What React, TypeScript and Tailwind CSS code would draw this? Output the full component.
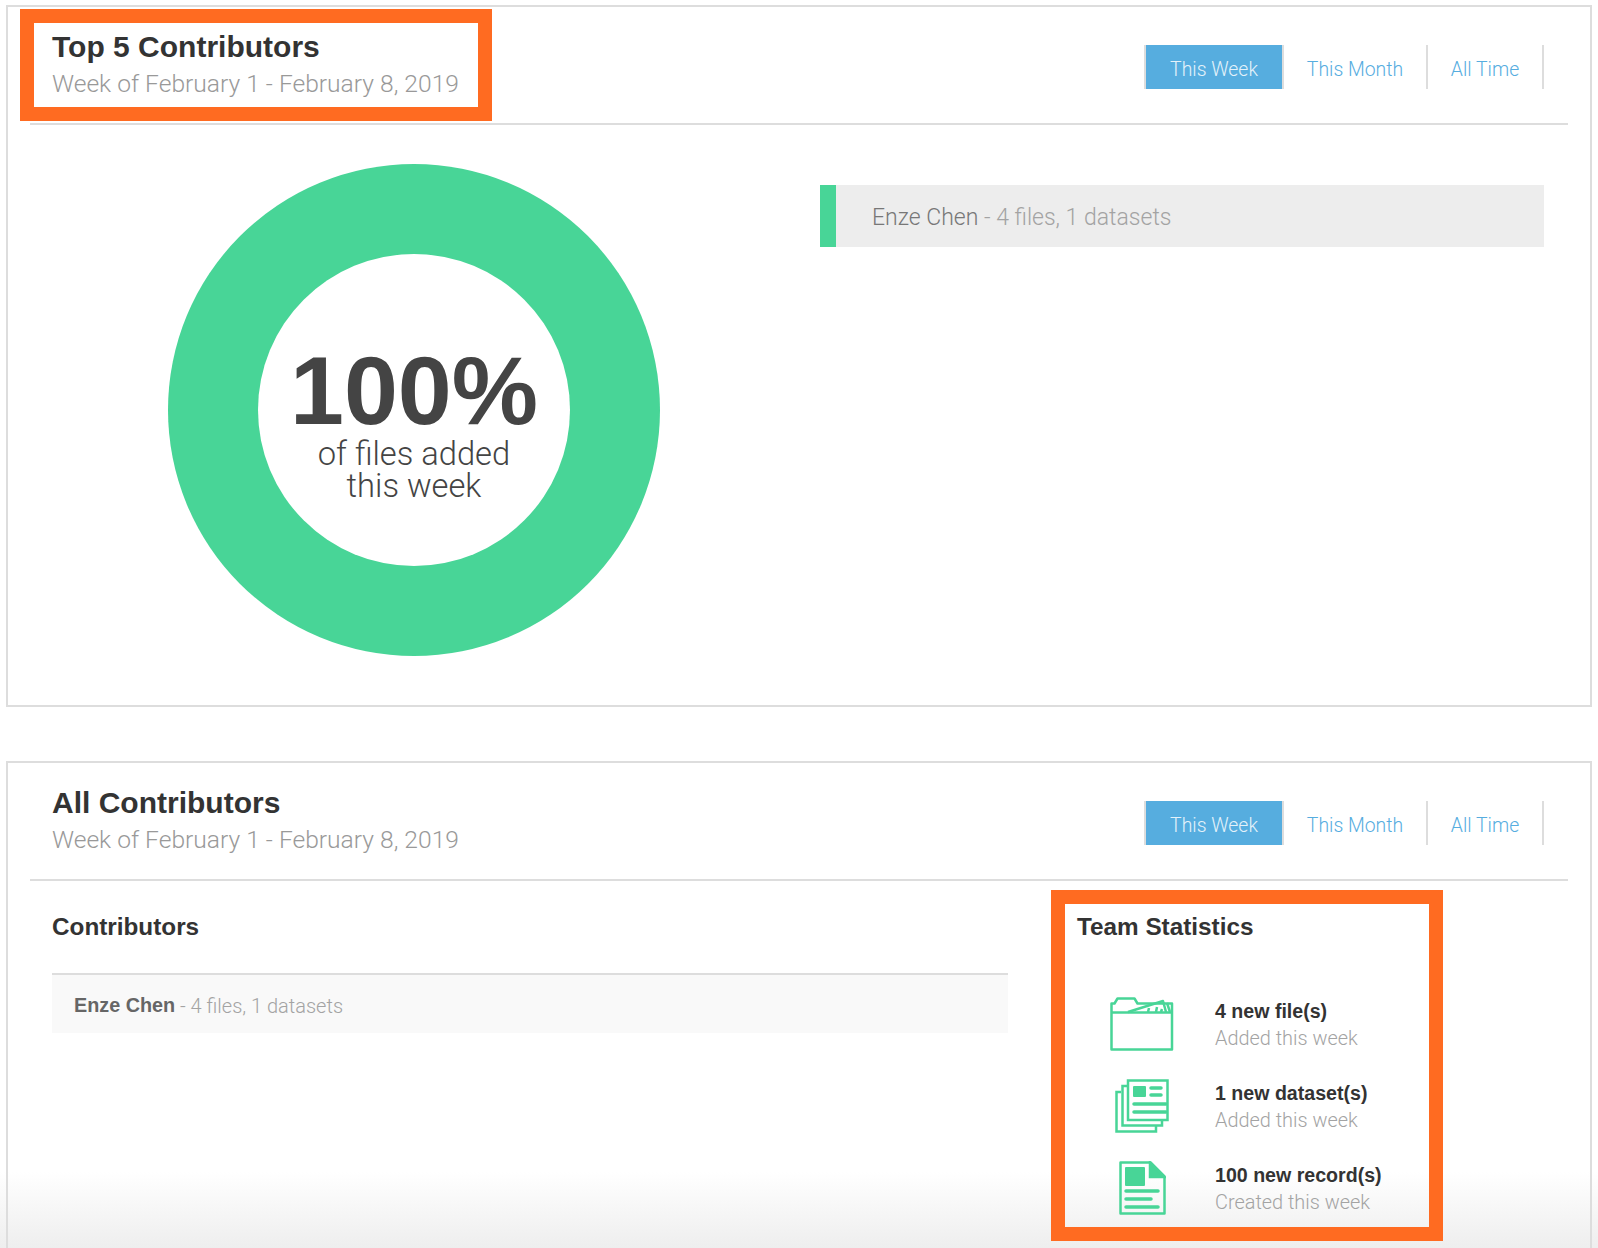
const boldFont = "font-['Liberation_Sans',Arial,sans-serif] font-bold"

function FolderIcon() {
  return (
    <svg width="64" height="54" viewBox="0 0 64 54" fill="none" stroke="#48d597" strokeWidth="2.5" strokeLinejoin="round">
      <path d="M1.500 52.500V6.500h3l3-5h17l3 5h31l3.500 0v46z" />
      <path d="M1.500 15.500h61" />
      <path d="M18 15L53 4l3 11" />
      <path d="M57 6l3 9M38 15l1-4M46 15l1-5M51 15l1-3" />
    </svg>
  )
}

function DatasetIcon() {
  return (
    <svg width="54" height="54" viewBox="0 0 54 54" fill="none" stroke="#48d597" strokeWidth="2.5">
      <path d="M6 13H1.500v39.500H41V47" />
      <path d="M12 7H7.500v39.500H47V41" />
      <rect x="13" y="1.500" width="39.500" height="39.500" fill="#fff" />
      <rect x="18" y="7" width="13" height="11" rx="1" fill="#48d597" stroke="none" />
      <path d="M36 9h10M36 16h10M19 25h32M19 33h32" strokeWidth="3.500" strokeLinecap="round" />
    </svg>
  )
}

function RecordIcon() {
  return (
    <svg width="47" height="54" viewBox="0 0 47 54" fill="none" stroke="#48d597" strokeWidth="2.5">
      <path d="M1.500 1.500h30l14 14v37h-44z" strokeLinejoin="round" />
      <path d="M31 1.500l14.500 14.500H31z" fill="#48d597" />
      <rect x="6" y="6" width="20" height="19" rx="1" fill="#48d597" stroke="none" />
      <path d="M7 30h32M7 38h25M7 46h32" strokeWidth="3.500" strokeLinecap="round" />
    </svg>
  )
}

function CardHeader({ title, highlight }: { title: string; highlight?: boolean }) {
  return (
    <div className="ml-[22px] mr-[22px] flex h-[118px] items-start justify-between border-b-2 border-[#ddd] pl-[22px]">
      <div className="relative pt-[22px]">
        {highlight && (
          <div className="absolute left-[-32px] top-[2px] h-[112px] w-[472px] border-[14px] border-[#ff6b21]" />
        )}
        <h2 className={`text-[30px] leading-[36px] text-[#333] ${boldFont}`}>{title}</h2>
        <p className="mt-[2px] text-[24.600px] font-light leading-[34px] text-[#999]">Week of February 1 - February 8, 2019</p>
      </div>
      <div className="mr-[24px] mt-[38px] flex h-[44px] text-[19.400px] font-light text-[#56addf]">
        <div className="flex w-[140px] items-center justify-center border-x-2 border-[#ddd] bg-[#56addf] pt-[5px] text-[#e4f2fa]">This Week</div>
        <div className="flex w-[144px] items-center justify-center border-r-2 border-[#ddd] pt-[5px]">This Month</div>
        <div className="flex w-[116px] items-center justify-center border-r-2 border-[#ddd] pt-[5px]">All Time</div>
      </div>
    </div>
  )
}

function StatRow({ icon, title, sub }: { icon: React.ReactNode; title: string; sub: string }) {
  return (
    <div className="flex h-[82px] items-center">
      <div className="flex w-[138px] justify-center pr-[8px]">{icon}</div>
      <div className="pt-[2px]">
        <div className={`text-[19.600px] leading-[28px] text-[#333] ${boldFont}`}>{title}</div>
        <div className="text-[19.900px] font-light leading-[28px] text-[#a3a3a3]">{sub}</div>
      </div>
    </div>
  )
}

export default function App() {
  return (
    <div className="relative h-[1248px] w-[1598px] overflow-hidden bg-white px-[6px] pt-[5px] font-['Roboto','Liberation_Sans',sans-serif]">
      {/* bottom fade, behind the cards */}
      <div className="absolute inset-x-0 bottom-0 h-[76px] bg-gradient-to-b from-white to-[#eeeeee]" />

      {/* Top 5 */}
      <section className="relative h-[702px] border-2 border-[#ddd]">
        <CardHeader title="Top 5 Contributors" highlight />
        <div className="flex">
          <div className="ml-[160px] mt-[39px] flex h-[492px] w-[492px] items-center justify-center rounded-full bg-[#48d597]">
            <div className="flex h-[312px] w-[312px] flex-col items-center justify-center rounded-full bg-white pt-[31px] text-[#444]">
              <div className={`text-[97px] leading-[84px] ${boldFont}`}>100%</div>
              <div className="mt-[5px] text-center text-[32.700px] font-light leading-[32px]">
                of files added
                <br />
                this week
              </div>
            </div>
          </div>
          <div className="ml-[160px] mt-[60px] flex h-[62px] w-[724px] items-center border-l-[16px] border-[#48d597] bg-[#ededed] pl-[36px] pt-[4px] text-[23px] font-light text-[#a3a3a3]">
            <span className="text-[#777]">Enze Chen</span>&nbsp;- 4 files, 1 datasets
          </div>
        </div>
      </section>

      {/* All contributors */}
      <section className="relative mt-[54px] h-[600px] border-2 border-[#ddd]">
        <CardHeader title="All Contributors" />
        <div className="flex">
          <div className="ml-[44px] w-[956px] pt-[30px]">
            <h3 className={`text-[24.300px] leading-[32px] text-[#333] ${boldFont}`}>Contributors</h3>
            <div className="mt-[30px] flex h-[60px] items-center border-t-2 border-[#ddd] bg-[#f9f9f9] pl-[22px] pt-[3px] text-[20px] font-light text-[#a3a3a3]">
              <span className={`text-[19.800px] text-[#666] ${boldFont}`}>Enze Chen</span>&nbsp;- 4 files, 1 datasets
            </div>
          </div>
          <div className="relative ml-[69px] w-[364px] pt-[30px]">
            <h3 className={`text-[24.300px] leading-[32px] text-[#333] ${boldFont}`}>Team Statistics</h3>
            <div className="mt-[40px]">
              <StatRow icon={<FolderIcon />} title="4 new file(s)" sub="Added this week" />
              <StatRow icon={<DatasetIcon />} title="1 new dataset(s)" sub="Added this week" />
              <StatRow icon={<RecordIcon />} title="100 new record(s)" sub="Created this week" />
            </div>
            <div className="absolute left-[-26px] top-[9px] h-[351px] w-[392px] border-[14px] border-[#ff6b21]" />
          </div>
        </div>
      </section>
    </div>
  )
}
